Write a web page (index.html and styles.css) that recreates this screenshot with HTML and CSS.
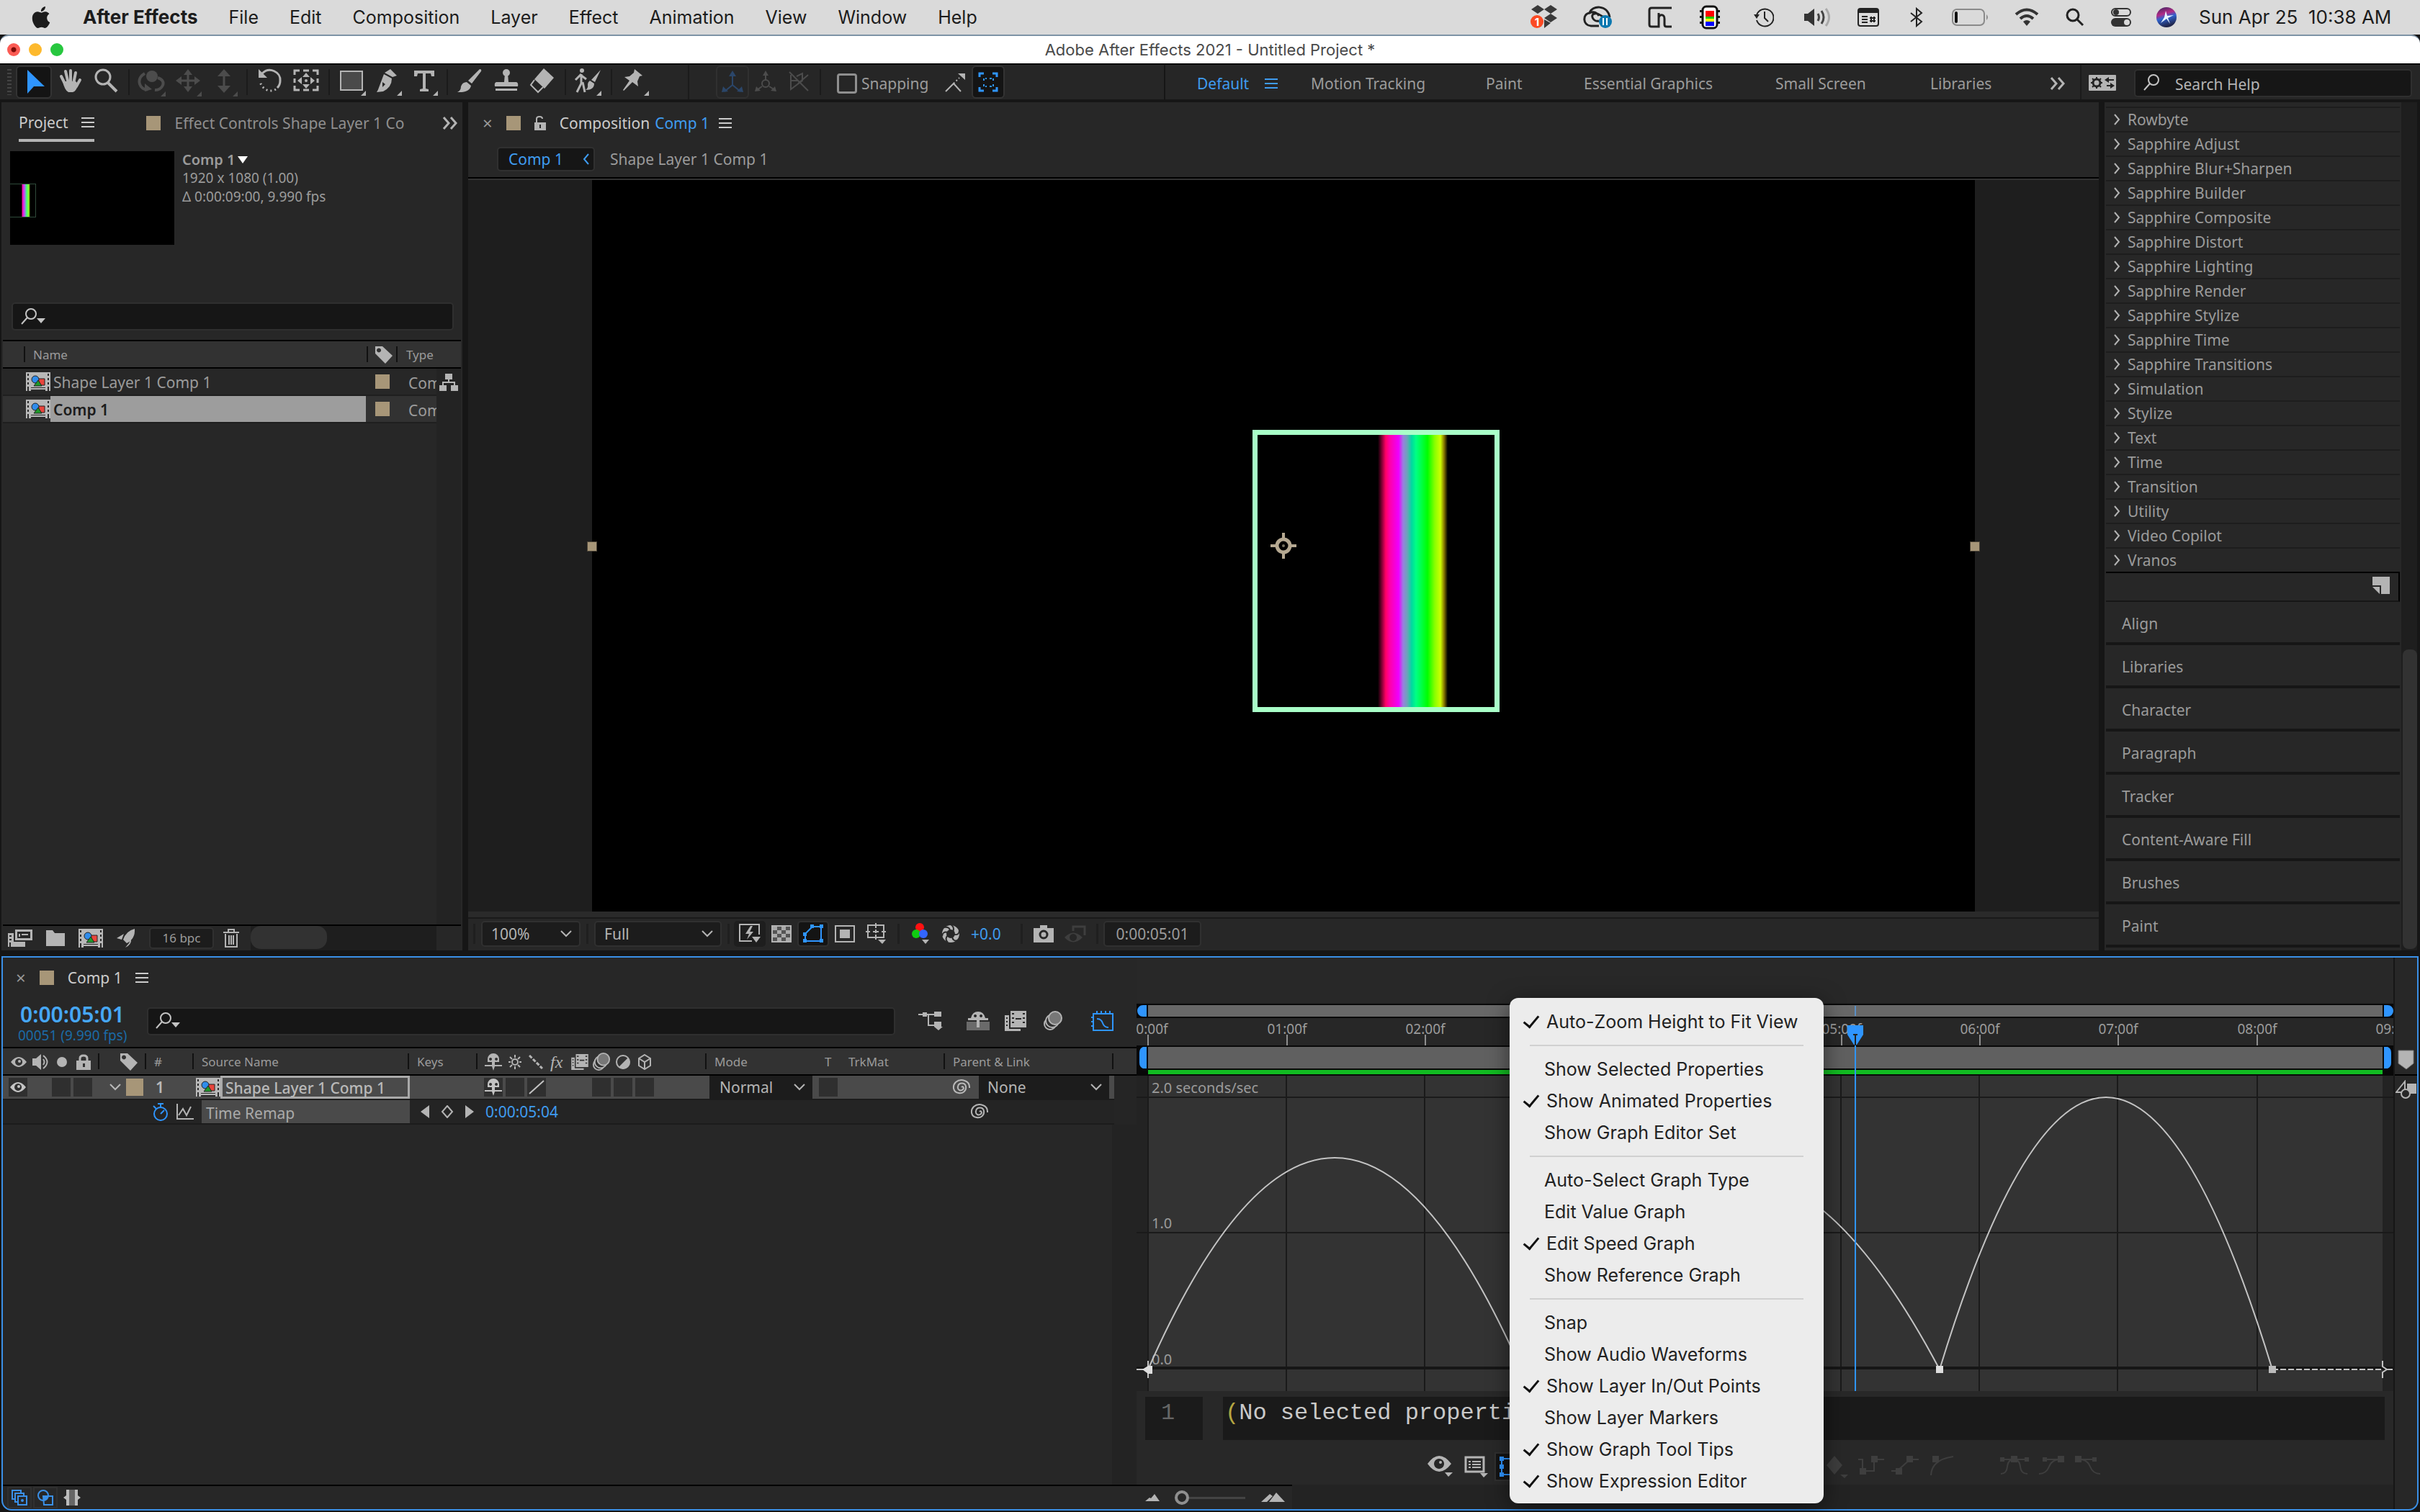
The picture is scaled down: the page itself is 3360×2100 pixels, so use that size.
FILE: index.html
```html
<!DOCTYPE html>
<html lang="en">
<head>
<meta charset="utf-8">
<title>Adobe After Effects 2021 - Untitled Project *</title>
<link rel="stylesheet" href="styles.css">
</head>
<body>
<svg class="defs" width="0" height="0" aria-hidden="true">
  <symbol id="comp" viewBox="0 0 34 26">
    <path fill="#b8b8b8" d="M0 0h34v26H0z"/>
    <path fill="#2b2b2b" d="M2 2h2v3H2zM2 8h2v3H2zM2 14h2v3H2zM2 20h2v6H2zM30 2h2v3h-2zM30 8h2v3h-2zM30 14h2v3h-2zM30 20h2v6h-2zM7 21h20v1H7zM7 24h20v2H7z"/>
    <path fill="#e8453c" stroke="#222" d="M17 9h9v9h-7z"/>
    <circle cx="13" cy="10" r="5" fill="#2f8ceb" stroke="#222"/>
    <path fill="#1f9a2a" stroke="#222" d="M17 11l5 8H11z"/>
  </symbol>
  <symbol id="menu" viewBox="0 0 18 16"><path fill="currentColor" d="M0 1h18v2H0zM0 7h18v2H0zM0 13h18v2H0z"/></symbol>
  <symbol id="more" viewBox="0 0 22 18"><path fill="none" stroke="currentColor" stroke-width="3" d="M2 1l7 8-7 8M12 1l7 8-7 8"/></symbol>
  <symbol id="down" viewBox="0 0 16 10"><path fill="none" stroke="currentColor" stroke-width="2" d="M1 1l7 7 7-7"/></symbol>
  <symbol id="right" viewBox="0 0 9 16"><path fill="none" stroke="currentColor" stroke-width="2" d="M1 1l6 7-6 7"/></symbol>
  <symbol id="find" viewBox="0 0 36 26"><circle cx="14" cy="9" r="7" fill="none" stroke="currentColor" stroke-width="2"/><path stroke="currentColor" stroke-width="2" d="M9 14l-8 9"/></symbol>
  <symbol id="findmenu" viewBox="0 0 36 26"><circle cx="14" cy="9" r="7" fill="none" stroke="currentColor" stroke-width="2"/><path stroke="currentColor" stroke-width="2" d="M9 14l-8 9"/><path fill="currentColor" d="M22 15h12l-6 7z"/></symbol>
  <symbol id="tag" viewBox="0 0 24 24"><path fill="currentColor" fill-rule="evenodd" d="M0 0h10l14 13-10 11L0 10zM5 2.500a3 3 0 1 0 .1 0z"/></symbol>
  <symbol id="eye" viewBox="0 0 22 16"><path fill="currentColor" fill-rule="evenodd" d="M0 8Q11-6 22 8 11 22 0 8zM11 3a5 5 0 1 0 .1 0z"/><circle cx="12" cy="7" r="2" fill="currentColor"/></symbol>
  <symbol id="shy" viewBox="0 0 24 24"><path fill="currentColor" fill-rule="evenodd" d="M4 12V8a8 8 0 0 1 16 0v4h-6v4h10v2H14l-2 6-2-6H0v-2h10v-4zM8 6a2 2 0 1 0 .1 0zM16 6a2 2 0 1 0 .1 0z"/></symbol>
  <symbol id="blur" viewBox="0 0 28 28"><circle cx="10" cy="18" r="8" fill="none" stroke="currentColor" stroke-width="2"/><circle cx="13" cy="14" r="9" fill="#303030" stroke="currentColor" stroke-width="2"/><circle cx="17" cy="10" r="9" fill="#777" stroke="currentColor" stroke-width="2"/></symbol>
  <symbol id="film" viewBox="0 0 30 28"><path fill="currentColor" fill-rule="evenodd" d="M8 0h22v23H8zM10 3v2h3V3zM10 9v2h3V9zM10 15v2h3v-2zM25 3v2h3V3zM25 9v2h3V9zM25 15v2h3v-2zM15 10v2h8v-2zM0 6h6v19h16v3H0zM2 9v2h2V9zM2 14v2h2v-2zM2 19v2h2v-2z"/></symbol>
  <symbol id="whip" viewBox="0 0 26 22"><path fill="none" stroke="currentColor" stroke-width="2" d="M13 11c2-2 4 1 2 3-3 3-8 1-7-4 1-6 10-6 11 0 1 7-5 10-10 9C1 18 0 9 5 4 12-2 25 2 24 12"/></symbol>
</svg>

<header class="menubar">
  <nav class="menus">
    <a href="#" aria-label="Apple"><svg width="30" height="32" viewBox="0 0 24 24"><path fill="#1c1c1c" d="M12.152 6.896c-.948 0-2.415-1.078-3.96-1.04-2.04.027-3.91 1.183-4.961 3.014-2.117 3.675-.546 9.103 1.519 12.090 1.013 1.454 2.208 3.090 3.792 3.039 1.520-.065 2.090-.987 3.935-.987 1.831 0 2.350.987 3.960.948 1.637-.026 2.676-1.480 3.676-2.948 1.156-1.688 1.636-3.325 1.662-3.415-.039-.013-3.182-1.221-3.220-4.857-.026-3.040 2.480-4.494 2.597-4.559-1.429-2.090-3.623-2.324-4.390-2.376-2-.156-3.675 1.090-4.610 1.090zM15.530 3.830c.843-1.012 1.400-2.427 1.245-3.830-1.207.052-2.662.805-3.532 1.818-.780.896-1.454 2.338-1.273 3.714 1.338.104 2.715-.688 3.559-1.701"/></svg></a>
    <a href="#" class="app">After Effects</a><a href="#">File</a><a href="#">Edit</a><a href="#">Composition</a><a href="#">Layer</a><a href="#">Effect</a><a href="#">Animation</a><a href="#">View</a><a href="#">Window</a><a href="#">Help</a>
  </nav>
  <div class="status">
    <svg width="38" height="34" viewBox="0 0 38 34"><path fill="#3a3a3a" d="M10 0l9 6-9 6-9-6zM28 0l9 6-9 6-9-6zM28 12l9 6-9 6-9-6zM19 20l9 5-9 7z"/><circle cx="9" cy="23" r="9" fill="#fb4a23"/><text x="9" y="29" text-anchor="middle" class="badge">1</text></svg>
    <svg width="40" height="32" viewBox="0 0 40 32"><g fill="none" stroke="#222" stroke-width="3"><path d="M22 28H11C-1 27-1 11 9 10c3-11 25-12 28 6"/><path d="M22 21c-8 2-13-9-6-10 7-2 9 6 15 4M9 10c6-3 11 0 13 4"/></g><circle cx="31" cy="22" r="9" fill="#0b78b0"/><path stroke="#fff" stroke-width="2" d="M28 17v10M33 17v10"/></svg>
    <svg width="34" height="30" viewBox="0 0 34 30"><path fill="none" stroke="#222" stroke-width="3" d="M33 2H5q-3 0-3 3v20q0 3 3 3h10V9M15 17c0-7 8-7 8 0v8q0 3 3 3h7"/></svg>
    <svg width="28" height="34" viewBox="0 0 28 34"><rect x="4" y="2" width="20" height="30" rx="5" fill="#fff" stroke="#111" stroke-width="3"/><path fill="#111" d="M0 7h3v3H0zM0 15h3v3H0zM0 23h3v3H0zM25 7h3v3h-3zM25 15h3v3h-3zM25 23h3v3h-3z"/><path fill="#f00" d="M8 8h12v8H8z"/><path fill="#2c0" d="M8 16h12v3H8z"/><path fill="#ff0" d="M8 19h12v4H8z"/><path fill="#00f" d="M8 23h12v6H8z"/></svg>
    <svg width="28" height="28" viewBox="0 0 28 28"><path fill="none" stroke="#222" stroke-width="2" d="M4 11A12 12 0 1 1 4 18M15 6v9l5 5"/><path fill="#222" d="M0 10h8l-4 6z"/></svg>
    <svg width="38" height="26" viewBox="0 0 38 26"><path fill="#333" d="M0 8h5l9-7v24l-9-7H0z"/><path fill="none" stroke="#444" stroke-width="3" d="M19 8q3 5 0 10M24 4q6 9 0 18"/><path fill="none" stroke="#aaa" stroke-width="3" d="M30 1q9 12 0 24"/></svg>
    <svg width="30" height="26" viewBox="0 0 30 26"><rect x="1" y="1" width="28" height="24" rx="3" fill="none" stroke="#222" stroke-width="2"/><path fill="#222" d="M2 2h26v5H2zM6 11h8v2H6zM6 15h8v2H6zM6 19h8v2H6z"/><path fill="none" stroke="#222" stroke-width="2" d="M19 12v8M23 12v8M17 14h8M17 18h8"/></svg>
    <svg width="18" height="28" viewBox="0 0 18 28"><path fill="none" stroke="#222" stroke-width="2" d="M1 8l15 12-7 6V2l7 6L1 20"/></svg>
    <svg width="52" height="24" viewBox="0 0 52 24"><rect x="1" y="1" width="44" height="22" rx="6" fill="none" stroke="#8a8a8a" stroke-width="2"/><rect x="4" y="4" width="4" height="16" rx="2" fill="#111"/><path fill="#8a8a8a" d="M48 8q4 4 0 8z"/></svg>
    <svg width="34" height="26" viewBox="0 0 34 26"><path fill="none" stroke="#333" stroke-width="4" d="M2 9q15-13 30 0M8 15q9-8 18 0"/><path fill="#333" d="M12 19q5-4 10 0l-5 6z"/></svg>
    <svg width="26" height="26" viewBox="0 0 26 26"><circle cx="10" cy="10" r="8" fill="none" stroke="#222" stroke-width="3"/><path stroke="#222" stroke-width="3" d="M16 16l8 8"/></svg>
    <svg width="28" height="26" viewBox="0 0 28 26"><rect x="1" y="1" width="26" height="10" rx="5" fill="none" stroke="#333" stroke-width="2"/><circle cx="7" cy="6" r="4" fill="#333"/><rect y="14" width="28" height="12" rx="6" fill="#333"/><circle cx="22" cy="20" r="4" fill="#dadada"/></svg>
    <svg width="28" height="28" viewBox="0 0 28 28"><defs><linearGradient id="siri" x2=".3" y2="1"><stop offset="0" stop-color="#33265e"/><stop offset=".4" stop-color="#b32a86"/><stop offset=".6" stop-color="#3063cf"/><stop offset="1" stop-color="#20264d"/></linearGradient></defs><circle cx="14" cy="14" r="14" fill="url(#siri)"/><path fill="#e8f4ff" d="M13 5l2 7 9-1-8 4 3 8-5-7-8 6 5-8z"/></svg>
    <time>Sun Apr 25&nbsp; 10:38 AM</time>
  </div>
</header>

<div class="titlebar">
  <div class="lights"><button class="light close" aria-label="Close"></button><button class="light min" aria-label="Minimize"></button><button class="light max" aria-label="Zoom"></button></div>
  <h1>Adobe After Effects 2021 - Untitled Project *</h1>
  <span></span>
</div>

<div class="toolbar">
  <div class="tools">
    <i class="grip"></i>
    <button class="tool on" aria-label="Selection"><svg width="40" height="44"><path fill="#2f95ff" d="M11 5v33l9-10h15z"/></svg></button>
    <button class="tool" aria-label="Hand"><svg width="40" height="44"><g fill="none" stroke="currentColor" stroke-width="4" stroke-linecap="round"><path d="M8 14l6 12M14 7l4 17M21 6v18M28 9l-3 15M34 19l-5 9"/></g><path fill="currentColor" d="M10 21h18l4 4q-4 11-8 11h-6q-5-2-8-15z"/></svg></button>
    <button class="tool" aria-label="Zoom"><svg width="40" height="44"><circle cx="16" cy="15" r="10" fill="none" stroke="currentColor" stroke-width="3"/><path stroke="currentColor" stroke-width="4" d="M23 23l12 12"/></svg></button>
    <i class="sep"></i>
    <button class="tool dim" aria-label="Orbit"><svg width="40" height="44"><circle cx="20" cy="14" r="8" fill="currentColor"/><path fill="none" stroke="currentColor" stroke-width="4" d="M10 10C-4 18 4 34 14 32M28 16c14 4 6 18-4 17"/><path fill="currentColor" d="M10 24l10 8-10 3zM39 42h-7l7-7z"/></svg></button>
    <button class="tool dim" aria-label="Pan camera"><svg width="40" height="44"><path stroke="currentColor" stroke-width="3" d="M20 8v24M8 20h24"/><path fill="currentColor" d="M20 4l6 8H14zM20 36l6-8H14zM3 20l8-6v12zM37 20l-8-6v12zM39 42h-7l7-7z"/></svg></button>
    <button class="tool dim" aria-label="Dolly"><svg width="40" height="44"><path stroke="currentColor" stroke-width="3" d="M20 8v24"/><path fill="currentColor" d="M20 4l9 10H11zM20 37l9-10H11zM39 42h-7l7-7z"/></svg></button>
    <i class="sep"></i>
    <button class="tool" aria-label="Rotation"><svg width="40" height="44"><path fill="none" stroke="currentColor" stroke-width="3" d="M9 10c10-10 26-2 25 10 0 4-2 8-4 10"/><path fill="none" stroke="currentColor" stroke-width="3" stroke-dasharray="2 4" d="M28 32C18 38 7 30 6 20"/><path fill="currentColor" d="M4 4v12h12z"/></svg></button>
    <button class="tool" aria-label="Pan behind"><svg width="40" height="44"><path fill="none" stroke="currentColor" stroke-width="3" d="M4 12V6h7M16 6h8M29 6h7v6M36 17v6M36 27v6h-7M24 33h-8M11 33H4v-6M4 23v-6"/><path fill="currentColor" d="M20 9l5 6H15zM20 31l5-6H15zM8 20l6-5v10zM32 20l-6-5v10z"/><circle cx="20" cy="20" r="2" fill="currentColor"/></svg></button>
    <i class="sep"></i>
    <button class="tool" aria-label="Rectangle"><svg width="40" height="44"><path fill="#4a4a4a" stroke="currentColor" stroke-width="2" d="M4 7h30v26H4z"/><path fill="currentColor" d="M39 41h-7l7-7z"/></svg></button>
    <button class="tool" aria-label="Pen"><svg width="40" height="44"><path fill="currentColor" d="M23 4l9 9-6 2-11-6zM14 11l11 6q0 12-12 18l-9 1 8-14v7l4-4-4-3-7 13zM39 41h-7l7-7z"/></svg></button>
    <button class="tool" aria-label="Type"><svg width="40" height="44"><path fill="currentColor" d="M6 6h28v8h-4l-1-4h-7v21l4 1v3H14v-3l4-1V10h-7l-1 4H6zM39 41h-7l7-7z"/></svg></button>
    <i class="sep"></i>
    <button class="tool" aria-label="Brush"><svg width="40" height="44"><path fill="currentColor" d="M33 4q3 0 2 3L22 24l-5-4zM15 22l6 5q-2 10-19 9 5-2 5-8 2-6 8-6z"/></svg></button>
    <button class="tool" aria-label="Clone stamp"><svg width="40" height="44"><circle cx="20" cy="9" r="5" fill="currentColor"/><path fill="currentColor" d="M18 10h4l1 12h11q3 1 2 6H4q-1-5 2-6h11zM5 31h30v3H5z"/></svg></button>
    <button class="tool" aria-label="Eraser"><svg width="40" height="44"><path fill="currentColor" d="M22 3l14 13-13 15L9 18z"/><path fill="none" stroke="currentColor" stroke-width="2" d="M9 19l-5 7 10 10 7-7"/></svg></button>
    <i class="sep"></i>
    <button class="tool" aria-label="Roto brush"><svg width="40" height="44"><circle cx="11" cy="6" r="3" fill="currentColor"/><path fill="none" stroke="currentColor" stroke-width="3" d="M10 11v13l-6 12M12 22l3 14M2 19l7-7 8 6"/><path fill="currentColor" d="M37 5l-8 17-5-3zM22 20l6 4q0 9-12 9 4-3 3-7 0-4 3-6zM38 41h-7l7-7z"/></svg></button>
    <i class="sep"></i>
    <button class="tool" aria-label="Puppet pin"><svg width="40" height="44"><path fill="currentColor" d="M20 4l11 9-4 1-3 7 1 7-8-6L5 34l-1-1 9-13-7-5 7-1 6-5zM40 41h-7l7-7z"/></svg></button>
    <i class="sep wide"></i>
    <button class="tool axis local" aria-label="Local axis"><svg width="40" height="44"><path fill="none" stroke="currentColor" stroke-width="2" d="M20 10v16L9 35M20 26l11 9"/><path fill="currentColor" d="M20 6l5 8H15zM5 36l2-8 7 7zM35 36l-2-8-7 7z"/></svg></button>
    <button class="tool axis dim" aria-label="World axis"><svg width="40" height="44"><path fill="none" stroke="currentColor" stroke-width="2" d="M20 10v10M15 28L8 33M25 28l8 5"/><circle cx="20" cy="24" r="5" fill="none" stroke="currentColor" stroke-width="2"/><path fill="currentColor" d="M20 6l4 7h-8zM5 35l2-7 6 6zM35 35l-2-7-6 6z"/></svg></button>
    <button class="tool axis dim" aria-label="View axis"><svg width="40" height="44"><path fill="none" stroke="currentColor" stroke-width="2" d="M7 8l26 26M9 12v20l16-12V10l-8 4M19 24l14-12M8 20h10"/></svg></button>
    <i class="sep"></i>
    <label class="snap"><input type="checkbox">Snapping</label>
    <button class="tool axis" aria-label="Snap to edges"><svg width="40" height="44"><path fill="none" stroke="currentColor" stroke-width="2" d="M7 35l11-11 10 11"/><path stroke="currentColor" stroke-width="2" stroke-dasharray="2 3" d="M18 24l8-8"/><path fill="currentColor" d="M24 10h10v9z"/></svg></button>
    <button class="tool axis on" aria-label="Snap to features"><svg width="40" height="44"><path fill="none" stroke="#2f95ff" stroke-width="3" d="M8 15v-5h6M26 10h6v5M32 29v5h-6M14 34H8v-5"/><path fill="none" stroke="#2f95ff" stroke-width="2" stroke-dasharray="3 2" d="M14 20v-3h4M22 17h5v4M14 25v3h4M22 28h5v-4"/></svg></button>
  </div>
  <nav class="spaces">
    <a href="#" class="sel">Default</a><button class="ic sel" aria-label="Workspace menu"><svg width="18" height="16"><use href="#menu"/></svg></button>
    <a href="#">Motion Tracking</a><a href="#">Paint</a><a href="#">Essential Graphics</a><a href="#">Small Screen</a><a href="#">Libraries</a>
    <button class="ic" aria-label="More workspaces"><svg width="22" height="18"><use href="#more"/></svg></button>
  </nav>
  <div class="help">
    <button class="ic" aria-label="Sync settings"><svg width="38" height="22" viewBox="0 0 38 22"><rect width="38" height="22" rx="1" fill="#b4b4b4"/><circle cx="11" cy="11" r="5" fill="none" stroke="#222" stroke-width="3"/><path stroke="#222" stroke-width="2" d="M11 3v3M11 16v3M3 11h3M16 11h3M5 5l2 2M15 15l2 2M17 5l-2 2M7 15l-2 2"/><path fill="#222" d="M22 7l6-4v3h7v2h-7v3zM36 15l-6-4v3h-5v2h5v3z"/></svg></button>
    <label class="search"><svg width="36" height="26"><use href="#find"/></svg><input type="text" placeholder="Search Help" aria-label="Search Help"></label>
  </div>
</div>

<main class="upper">
  <section class="panel project">
    <div class="tabs">
      <button class="tab active">Project <svg width="18" height="16"><use href="#menu"/></svg></button>
      <button class="tab second"><i class="swatch"></i><span>Effect Controls Shape Layer 1 Co</span></button>
      <button class="ic" aria-label="More tabs"><svg width="22" height="18"><use href="#more"/></svg></button>
    </div>
    <div class="info">
      <div class="thumb"><i></i></div>
      <div class="meta"><b>Comp 1 <svg width="14" height="10" viewBox="0 0 14 10"><path fill="#fff" d="M0 0h14L7 10z"/></svg></b><span>1920 x 1080 (1.00)</span><span>Δ 0:00:09:00, 9.990 fps</span></div>
    </div>
    <label class="search wide"><svg width="36" height="26"><use href="#findmenu"/></svg><input type="text" aria-label="Search project"></label>
    <table class="items">
      <colgroup><col class="c-gap"><col><col class="c-tag"><col class="c-type"><col class="c-flow"></colgroup>
      <thead><tr><th></th><th class="pad">Name</th><th><svg width="24" height="24"><use href="#tag"/></svg></th><th class="type">Type</th><th></th></tr></thead>
      <tbody>
        <tr><td></td><td><div class="name"><svg width="34" height="26"><use href="#comp"/></svg><span>Shape Layer 1 Comp 1</span></div></td><td><i class="swatch small"></i></td><td class="type">Com</td><td class="flow"><svg width="26" height="24" viewBox="0 0 26 24"><path fill="currentColor" d="M8 0h10v8H8zM0 16h10v8H0zM16 16h10v8H16z"/><path fill="none" stroke="currentColor" stroke-width="2" d="M13 8v4M5 16v-4h16v4"/></svg></td></tr>
        <tr class="picked"><td></td><td><div class="name"><svg width="34" height="26"><use href="#comp"/></svg><span>Comp 1</span></div></td><td><i class="swatch small"></i></td><td class="type">Com</td><td class="flow"></td></tr>
      </tbody>
    </table>
    <div class="rest"></div>
    <footer class="projbar">
      <button class="ic" aria-label="Interpret footage"><svg width="34" height="24" viewBox="0 0 34 24"><path fill="currentColor" fill-rule="evenodd" d="M10 0h24v15H10zM13 3v9h18V3zM0 5h8v12h16v7H0zM2 8v2h3V8zM2 13v2h3v-2zM2 18v6h2v-6z"/><path fill="currentColor" d="M15 6h2v4h-2zM19 6h9v2h-9z"/></svg></button>
      <button class="ic" aria-label="New folder"><svg width="26" height="22" viewBox="0 0 26 22"><path fill="currentColor" d="M0 0h9l3 4h14v18H0z"/></svg></button>
      <button class="ic" aria-label="New composition"><svg width="34" height="26"><use href="#comp"/></svg></button>
      <button class="ic" aria-label="Project settings"><svg width="26" height="26" viewBox="0 0 26 26"><path fill="currentColor" d="M25 0q1 14-11 20l-5-5Q13 3 25 0zM0 13l10-6-3 8zM12 26l5-6 3-6q1 8-8 12z"/></svg></button>
      <button class="bpc">16 bpc</button>
      <button class="ic" aria-label="Delete"><svg width="22" height="26" viewBox="0 0 22 26"><path fill="none" stroke="currentColor" stroke-width="2" d="M0 5h22M7 5V1h8v4M3 7v18h16V7M8 9v13M11 9v13M14 9v13"/></svg></button>
      <div class="hscroll"><i></i></div>
    </footer>
  </section>

  <section class="panel comp">
    <div class="tabs">
      <button class="ic x" aria-label="Close tab">×</button><i class="swatch"></i>
      <svg width="16" height="20" viewBox="0 0 16 20"><path fill="none" stroke="#b4b4b4" stroke-width="2" d="M3 9V4q0-3 4-3t4 3"/><path fill="#b4b4b4" fill-rule="evenodd" d="M0 9h16v11H0zM7 12v5h2v-5z"/></svg>
      <button class="tab">Composition <em>Comp 1</em> <svg width="18" height="16"><use href="#menu"/></svg></button>
    </div>
    <div class="crumbs">
      <a href="#" class="cur">Comp 1 <svg width="9" height="16" viewBox="0 0 9 16"><path fill="none" stroke="currentColor" stroke-width="2" d="M8 1L2 8l6 7"/></svg></a><a href="#">Shape Layer 1 Comp 1</a>
    </div>
    <div class="viewer">
      <div class="canvas">
        <div class="shape"></div>
        <svg class="anchor" width="38" height="38" viewBox="0 0 38 38"><path stroke="#b5a891" stroke-width="4" d="M19 1v9M19 28v9M1 19h9M28 19h9"/><circle cx="19" cy="19" r="9" fill="none" stroke="#b5a891" stroke-width="5"/><circle cx="19" cy="19" r="2" fill="#77705f"/></svg>
        <i class="handle l"></i><i class="handle r"></i>
      </div>
    </div>
    <footer class="viewbar">
      <i class="div"></i>
      <span class="pick zoom"><select aria-label="Magnification"><option>100%</option></select><svg width="16" height="10"><use href="#down"/></svg></span>
      <i class="div"></i>
      <span class="pick res"><select aria-label="Resolution"><option>Full</option></select><svg width="16" height="10"><use href="#down"/></svg></span>
      <i class="div"></i>
      <button class="vb box" aria-label="Fast previews"><svg width="30" height="28" viewBox="0 0 30 28"><path fill="none" stroke="currentColor" stroke-width="2" d="M18 24H1V1h27v14"/><path fill="currentColor" d="M16 3L9 14h5l-3 8 9-11h-5l4-8zM18 18h12l-6 8z"/></svg></button>
      <button class="vb" aria-label="Transparency grid"><svg width="28" height="24" viewBox="0 0 28 24"><path fill="#555" stroke="currentColor" stroke-width="2" d="M1 1h26v22H1z"/><path fill="#aaa" d="M2 2h6v5H2zM14 2h6v5h-6zM8 7h6v5H8zM20 7h6v5h-6zM2 12h6v5H2zM14 12h6v5h-6zM8 17h6v5H8zM20 17h6v5h-6z"/></svg></button>
      <button class="vb on" aria-label="Mask visibility"><svg width="28" height="26" viewBox="0 0 28 26"><path fill="none" stroke="#2f95ff" stroke-width="2" d="M3 23h22V3H13L3 13z"/><path fill="#2f95ff" d="M0 20h5v5H0zM23 20h5v5h-5zM23 0h5v5h-5zM10 0h5v5h-5zM0 11h5v5H0z"/></svg></button>
      <button class="vb" aria-label="Region of interest"><svg width="28" height="24" viewBox="0 0 28 24"><path fill="none" stroke="currentColor" stroke-width="2" d="M1 1h26v22H1z"/><path fill="currentColor" d="M7 6h14v12H7z"/></svg></button>
      <button class="vb" aria-label="Grid options"><svg width="30" height="30" viewBox="0 0 30 30"><path fill="none" stroke="currentColor" stroke-width="2" d="M3 3h22v17H3zM14 0v7M14 16v7M0 12h6M22 12h6M10 12h8M14 9v5"/><path fill="currentColor" d="M17 23h11l-5 6z"/></svg></button>
      <i class="div"></i>
      <button class="vb" aria-label="Channels"><svg width="26" height="30" viewBox="0 0 26 30"><circle cx="12" cy="6" r="6" fill="#f11"/><circle cx="7" cy="15" r="6" fill="#1c1"/><circle cx="17" cy="15" r="6" fill="#36f"/><path fill="currentColor" d="M15 23h10l-5 6z"/></svg></button>
      <button class="vb ap" aria-label="Reset exposure"><svg width="26" height="26" viewBox="0 0 26 26"><circle cx="13" cy="13" r="9" fill="none" stroke="currentColor" stroke-width="6"/><path fill="none" stroke="#282828" stroke-width="2" d="M13 0q6 4 3 10M25 8q0 7-7 6M23 22q-7 2-8-5M9 25q-5-5 0-10M1 16q1-7 8-5M4 4q7-1 8 4"/></svg></button>
      <span class="expo">+0.0</span>
      <i class="div"></i>
      <button class="vb" aria-label="Take snapshot"><svg width="28" height="24" viewBox="0 0 28 24"><path fill="currentColor" d="M9 0h10v4h9v20H0V4h9z"/><circle cx="14" cy="13" r="5" fill="none" stroke="#282828" stroke-width="3"/></svg></button>
      <button class="vb dim" aria-label="Show snapshot"><svg width="30" height="28" viewBox="0 0 30 28"><path fill="currentColor" fill-rule="evenodd" d="M0 19Q12 6 25 19 12 32 0 19zM12 14a5 5 0 1 0 .1 0z"/><path fill="none" stroke="currentColor" stroke-width="3" d="M12 10V4h16v12"/></svg></button>
      <i class="div"></i>
      <button class="time">0:00:05:01</button>
    </footer>
  </section>

  <aside class="panel side">
    <ul class="effects">
      <li><svg width="9" height="16"><use href="#right"/></svg>Rowbyte</li>
      <li><svg width="9" height="16"><use href="#right"/></svg>Sapphire Adjust</li>
      <li><svg width="9" height="16"><use href="#right"/></svg>Sapphire Blur+Sharpen</li>
      <li><svg width="9" height="16"><use href="#right"/></svg>Sapphire Builder</li>
      <li><svg width="9" height="16"><use href="#right"/></svg>Sapphire Composite</li>
      <li><svg width="9" height="16"><use href="#right"/></svg>Sapphire Distort</li>
      <li><svg width="9" height="16"><use href="#right"/></svg>Sapphire Lighting</li>
      <li><svg width="9" height="16"><use href="#right"/></svg>Sapphire Render</li>
      <li><svg width="9" height="16"><use href="#right"/></svg>Sapphire Stylize</li>
      <li><svg width="9" height="16"><use href="#right"/></svg>Sapphire Time</li>
      <li><svg width="9" height="16"><use href="#right"/></svg>Sapphire Transitions</li>
      <li><svg width="9" height="16"><use href="#right"/></svg>Simulation</li>
      <li><svg width="9" height="16"><use href="#right"/></svg>Stylize</li>
      <li><svg width="9" height="16"><use href="#right"/></svg>Text</li>
      <li><svg width="9" height="16"><use href="#right"/></svg>Time</li>
      <li><svg width="9" height="16"><use href="#right"/></svg>Transition</li>
      <li><svg width="9" height="16"><use href="#right"/></svg>Utility</li>
      <li><svg width="9" height="16"><use href="#right"/></svg>Video Copilot</li>
      <li><svg width="9" height="16"><use href="#right"/></svg>Vranos</li>
    </ul>
    <div class="newfx"><button class="ic" aria-label="New"><svg width="24" height="24" viewBox="0 0 24 24"><path fill="currentColor" d="M0 0h24v24H12V12H0zM0 14h10v10z"/></svg></button></div>
    <div class="closed">
      <button>Align</button><button>Libraries</button><button>Character</button><button>Paragraph</button><button>Tracker</button><button>Content-Aware Fill</button><button>Brushes</button><button>Paint</button>
    </div>
  </aside>
  <div class="vscroll"><i></i></div>
</main>

<section class="timeline">
  <div class="layers">
    <div class="tabs">
      <button class="ic x" aria-label="Close tab">×</button><i class="swatch"></i>
      <button class="tab">Comp 1 <svg width="18" height="16"><use href="#menu"/></svg></button>
    </div>
    <div class="tltop">
      <div class="clock"><strong>0:00:05:01</strong><span>00051 (9.990 fps)</span></div>
      <label class="search"><svg width="36" height="26"><use href="#findmenu"/></svg><input type="text" aria-label="Search layers"></label>
      <div class="tlbtns">
        <svg width="34" height="26" viewBox="0 0 34 26"><path fill="none" stroke="currentColor" stroke-width="2" d="M0 4h24M14 4v15h10"/><path fill="currentColor" d="M6 1h6v6H6zM22 0h10v7H22zM22 14h10v7H22zM22 21h12l-6 5z"/></svg>
        <svg width="32" height="26" viewBox="0 0 32 26"><path fill="#6a6a6a" d="M0 14h32v12H0z"/><path fill="currentColor" fill-rule="evenodd" d="M2 12V9h4q2-9 10-9t10 9h4v3H18v10h-4V12zM12 4a2 2 0 1 0 .1 0zM20 4a2 2 0 1 0 .1 0z"/></svg>
        <svg width="30" height="28"><use href="#film"/></svg>
        <svg width="28" height="28"><use href="#blur"/></svg>
        <svg width="32" height="30" viewBox="0 0 32 30"><path fill="none" stroke="#2f95ff" stroke-width="2" d="M3 5h27v23H3zM8 5V1M14 5V1M20 5V1M26 5V1M0 10h3M0 16h3M0 22h3M8 12q6 0 8 6t8 6"/></svg>
      </div>
    </div>
    <table class="grid">
      <colgroup><col class="g-av"><col class="g-tag"><col class="g-num"><col><col class="g-keys"><col class="g-sw"><col class="g-mode"><col class="g-par"><col class="g-end"></colgroup>
      <thead><tr>
        <th><div class="av"><svg width="22" height="16"><use href="#eye"/></svg><svg width="26" height="22" viewBox="0 0 26 22"><path fill="currentColor" d="M0 6h5l7-6v22l-7-6H0z"/><path fill="none" stroke="currentColor" stroke-width="2" d="M15 7q3 4 0 8M15 2q11 9 0 18"/></svg><svg width="14" height="14"><circle cx="7" cy="7" r="7" fill="currentColor"/></svg><svg width="20" height="22" viewBox="0 0 20 22"><path fill="none" stroke="currentColor" stroke-width="3" d="M5 9V6q0-4 5-4t5 4v3"/><path fill="currentColor" fill-rule="evenodd" d="M0 9h20v13H0zM9 13v5h3v-5z"/></svg></div></th>
        <th class="tagc"><svg width="26" height="24"><use href="#tag"/></svg></th>
        <th class="pad">#</th><th class="pad">Source Name</th><th class="pad">Keys</th>
        <th><div class="sw"><svg width="24" height="24"><use href="#shy"/></svg><svg width="20" height="22" viewBox="0 0 20 22"><circle cx="10" cy="11" r="4" fill="none" stroke="currentColor" stroke-width="2"/><path stroke="currentColor" stroke-width="2" d="M10 1v4M10 17v4M1 11h3M16 11h3M3 4l3 3M14 15l3 3M17 4l-3 3M6 15l-3 3"/></svg><svg width="20" height="20" viewBox="0 0 20 20"><path stroke="currentColor" stroke-width="3" stroke-dasharray="5 2" d="M1 1l18 18"/></svg><i class="fx">fx</i><svg width="26" height="22"><use href="#film"/></svg><svg width="26" height="26"><use href="#blur"/></svg><svg width="20" height="20"><circle cx="10" cy="10" r="9" fill="none" stroke="currentColor" stroke-width="2"/><path fill="currentColor" d="M17 4A9 9 0 0 1 4 17z"/></svg><svg width="20" height="22" viewBox="0 0 20 22"><path fill="none" stroke="currentColor" stroke-width="2" d="M10 1l8 5v10l-8 5-8-5V6zM2 6l8 5 8-5M10 11v10"/></svg></div></th>
        <th class="pad"><div class="mode"><span>Mode</span><span>T</span><span>TrkMat</span></div></th><th class="pad">Parent &amp; Link</th><th></th>
      </tr></thead>
      <tbody>
        <tr class="layer">
          <td><div class="cells"><i><svg width="22" height="18"><use href="#eye"/></svg></i><b></b><i></i><i></i></div></td>
          <td><div class="lab"><svg width="16" height="10"><use href="#down"/></svg><i class="swatch"></i></div></td>
          <td class="num">1</td>
          <td><div class="src"><svg width="34" height="26"><use href="#comp"/></svg><span>Shape Layer 1 Comp 1</span></div></td>
          <td></td>
          <td><div class="cells"><i><svg width="24" height="24"><use href="#shy"/></svg></i><i></i><i><svg width="22" height="20"><path stroke="currentColor" stroke-width="2" d="M1 19L21 1"/></svg></i><b></b><b></b><i></i><i></i><i></i></div></td>
          <td><div class="blend"><span class="pick"><select aria-label="Blending mode"><option>Normal</option></select><svg width="16" height="10"><use href="#down"/></svg></span><i></i></div></td>
          <td><div class="parent"><svg width="26" height="22"><use href="#whip"/></svg><span class="pick"><select aria-label="Parent"><option>None</option></select><svg width="16" height="10"><use href="#down"/></svg></span></div></td>
          <td class="end"></td>
        </tr>
        <tr class="prop">
          <td></td><td></td>
          <td><div class="watch"><svg width="24" height="26" viewBox="0 0 24 26"><circle cx="12" cy="16" r="9" fill="none" stroke="#2f95ff" stroke-width="2"/><path fill="none" stroke="#2f95ff" stroke-width="2" d="M12 16l5-5M8 2h8M12 2v5M2 5l4 4"/></svg><svg width="24" height="22" viewBox="0 0 24 22"><path fill="none" stroke="currentColor" stroke-width="2" d="M1 0v21h23M3 16l6-9 5 9 6-12"/></svg></div></td>
          <td><div class="pname">Time Remap</div></td>
          <td><div class="keys"><svg width="12" height="18"><path fill="currentColor" d="M12 0v18L0 9z"/></svg><svg width="18" height="18"><path fill="none" stroke="currentColor" stroke-width="2" d="M9 1l7 8-7 8-7-8z"/></svg><svg width="12" height="18"><path fill="currentColor" d="M0 0v18l12-9z"/></svg></div></td>
          <td class="val">0:00:05:04</td><td></td>
          <td><div class="link"><svg width="26" height="22"><use href="#whip"/></svg></div></td><td class="end"></td>
        </tr>
      </tbody>
    </table>
    <div class="rest"></div>
    <footer class="tlbar">
      <button class="mini" aria-label="Layer switches"><svg width="22" height="22" viewBox="0 0 22 22"><path fill="none" stroke="#3a90e8" stroke-width="2" d="M4 13H1V1h12v3M8 17H5V5h12v3M9 9h12v12H9z"/><circle cx="15" cy="15" r="2" fill="#3a90e8"/></svg></button>
      <button class="mini" aria-label="Transfer controls"><svg width="22" height="22" viewBox="0 0 22 22"><circle cx="8" cy="8" r="7" fill="none" stroke="#3a90e8" stroke-width="2"/><path fill="none" stroke="#3a90e8" stroke-width="2" d="M8 9h13v12H9z"/><path fill="#3a90e8" d="M8 9h7q0 6-7 6z"/></svg></button>
      <button class="ic" aria-label="In out panes"><svg width="24" height="22" viewBox="0 0 24 22"><path fill="#666" d="M7 0h10v22H7z"/><path fill="#bbb" d="M4 0h4v22H4v-8l-4-3 4-3zM16 0h4v8l4 3-4 3v8h-4z"/></svg></button>
    </footer>
  </div>

  <div class="graph">
    <svg class="plot" viewBox="0 0 1745 540" preserveAspectRatio="none">
      <rect x="0" y="0" width="1745" height="540" fill="#272727"/>
      <path fill="#080808" d="M0 2h1745v20H0zM0 60h1745v42H0z"/>
      <path fill="#686868" d="M16 4h1714v16H16z"/><path fill="#606060" d="M16 62h1714v30H16z"/>
      <path fill="#12bb22" d="M16 94h1714v6H16z"/>
      <path fill="#2f95ff" d="M14 4H9a8 8 0 0 0 0 16h5zM1732 4h5a8 8 0 0 1 0 16h-5zM14 62h-5q-5 2-5 8v14q0 6 5 8h5zM1732 62h5q5 2 5 8v14q0 6-5 8h-5z"/>
      <path stroke="#8e8e8e" stroke-width="2" d="M16 45v15M209 45v15M401 45v15M594 45v15M786 45v15M979 45v15M1171 45v15M1363 45v15M1556 45v15"/>
      <g class="ruler"><text x="16" y="44">00:00f</text><text x="209" y="44">01:00f</text><text x="401" y="44">02:00f</text><text x="979" y="44">05:00f</text><text x="1171" y="44">06:00f</text><text x="1363" y="44">07:00f</text><text x="1556" y="44">08:00f</text><text x="1748" y="44">09:00f</text></g>
      <path fill="#232323" d="M0 102h1745v438H0z"/><path fill="#333" d="M16 102h1714v438H16z"/>
      <path fill="none" stroke="#1a1a1a" stroke-width="2" d="M16 102v438M208 102v438M400 102v438M593 102v438M785 102v438M978 102v438M1170 102v438M1362 102v438M1556 102v438M0 132h1745M0 320h1745"/>
      <path stroke="#161616" stroke-width="4" d="M0 508h1745"/>
      <g class="scale"><text x="21" y="126">2.0 seconds/sec</text><text x="21" y="314">1.0</text><text x="21" y="503">0.0</text></g>
      <path fill="none" stroke="#c4c4c4" stroke-width="2" d="M16 510Q275-78 534 510 824-40 1115 510 1346-246 1577 510"/>
      <path stroke="#c4c4c4" stroke-width="2" stroke-dasharray="8 3" d="M1577 510h152"/>
      <path fill="none" stroke="#c4c4c4" stroke-width="2" d="M1730 498v8l6 4-6 4v8M1736 510h8M0 510h10M16 498v24"/>
      <path fill="#ddd" d="M16 505h6v11h-6l-8-6zM1110 505h10v10h-10z"/><path fill="#bbb" d="M1572 505h10v10h-10z"/>
      <path fill="#2f95ff" d="M997 60h2v480h-2z"/><path fill="#5a8fc4" d="M997 5h2v14h-2z"/>
      <path fill="#2f95ff" d="M987 32h22v13l-9 14h-4l-9-14z"/><path fill="#222" d="M995 44h6v2h-2v14h-2V46h-2z"/>
    </svg>
    <div class="expr"><span class="gutter">1</span><code><b>(</b>No selected properties)</code></div>
    <div class="gtools">
      <button class="ic" aria-label="Choose properties"><svg width="36" height="30" viewBox="0 0 36 30"><path fill="currentColor" fill-rule="evenodd" d="M0 11q16-22 33 0-17 22-33 0zM16 4a7 7 0 1 0 .1 0z"/><circle cx="18" cy="9" r="2" fill="currentColor"/><path fill="currentColor" d="M24 23h11l-6 6z"/></svg></button>
      <button class="ic" aria-label="Graph options"><svg width="36" height="30" viewBox="0 0 36 30"><path fill="none" stroke="currentColor" stroke-width="3" d="M2 2h25v20H2z"/><path fill="currentColor" d="M6 7h3v2H6zM11 7h12v2H11zM6 11h3v2H6zM11 11h12v2H11zM6 15h3v2H6zM11 15h12v2H11zM22 24h11l-6 6z"/></svg></button>
      <button class="ic boxed" aria-label="Transform box"><svg width="30" height="30" viewBox="0 0 30 30"><path fill="none" stroke="#2f95ff" stroke-width="2" d="M4 4h22v22H4z"/><path fill="#2f95ff" d="M1 1h6v6H1zM1 12h6v6H1zM1 23h6v6H1z"/></svg></button>
      <div class="keytools">
        <svg width="32" height="32"><path fill="currentColor" d="M12 1l11 13-11 13L1 14zM20 27h11l-5 5z"/></svg>
        <svg width="36" height="28"><path fill="none" stroke="currentColor" stroke-width="2" d="M0 6h6v16h16V6h14"/><path fill="currentColor" d="M2 18h9v9H2zM18 1h9v9h-9z"/></svg>
        <svg width="38" height="28"><path fill="none" stroke="currentColor" stroke-width="2" d="M0 22h8L26 6h12"/><path fill="currentColor" d="M6 18h9v9H6zM21 1h9v9h-9z"/></svg>
        <svg width="34" height="28"><path fill="none" stroke="currentColor" stroke-width="2" d="M1 28Q2 6 32 2"/><path fill="currentColor" d="M3 1h9v9H3z"/></svg>
        <svg width="40" height="28"><path fill="none" stroke="currentColor" stroke-width="2" d="M2 6h36M1 26q8 0 9-10t9-10q8 0 9 10t10 10"/><path fill="currentColor" d="M0 3h6v6H0zM15 1h9v9h-9zM34 3h6v6h-6z"/></svg>
        <svg width="38" height="28"><path fill="none" stroke="currentColor" stroke-width="2" d="M1 26q10 0 14-10T30 6M8 6h24"/><path fill="currentColor" d="M6 3h6v6H6zM27 1h9v9h-9z"/></svg>
        <svg width="38" height="28"><path fill="none" stroke="currentColor" stroke-width="2" d="M36 26q-10 0-14-10T8 6M5 6h24"/><path fill="currentColor" d="M25 3h6v6h-6zM1 1h9v9H1z"/></svg>
      </div>
    </div>
    <footer class="zoombar">
      <div class="zoomer"><svg width="20" height="10"><path fill="currentColor" d="M0 10l6-5 2 1 5-6 7 10z"/></svg><input type="range" min="0" max="100" value="0" aria-label="Time zoom"><svg width="34" height="14"><path fill="currentColor" d="M0 13L12 2l4 3-8 8zM11 13L21 0l12 13z"/></svg></div>
    </footer>
    <div class="popup" role="menu">
      <button class="ck">Auto-Zoom Height to Fit View</button>
      <hr>
      <button>Show Selected Properties</button>
      <button class="ck">Show Animated Properties</button>
      <button>Show Graph Editor Set</button>
      <hr>
      <button>Auto-Select Graph Type</button>
      <button>Edit Value Graph</button>
      <button class="ck">Edit Speed Graph</button>
      <button>Show Reference Graph</button>
      <hr>
      <button>Snap</button>
      <button>Show Audio Waveforms</button>
      <button class="ck">Show Layer In/Out Points</button>
      <button>Show Layer Markers</button>
      <button class="ck">Show Graph Tool Tips</button>
      <button class="ck">Show Expression Editor</button>
    </div>
  </div>
  <div class="rail">
    <svg width="24" height="28" viewBox="0 0 24 28"><path fill="#b4b4b4" stroke="#777" d="M1 1h21v18l-10 8L1 19z"/></svg>
    <svg width="30" height="26" viewBox="0 0 30 26"><path fill="#b4b4b4" d="M16 5h13v14H16z"/><path fill="none" stroke="#b4b4b4" stroke-width="2" d="M13 2L1 17h12z"/><circle cx="14" cy="19" r="6" fill="#282828" stroke="#b4b4b4" stroke-width="2"/></svg>
  </div>
</section>
</body>
</html>
```
FILE: styles.css
```css
* { box-sizing: border-box; }
body {
  margin: 0;
  height: 100vh;
  display: flex;
  flex-direction: column;
  background: #161616;
  color: #9b9b9b;
  font: 21px/26px "Noto Sans", sans-serif;
  overflow: hidden;
}
svg { display: block; flex: none; }
i, em { font-style: normal; }
a { color: inherit; text-decoration: none; }
button, input, select { font: inherit; color: inherit; margin: 0; padding: 0; border: 0; background: none; }
button { display: flex; align-items: center; white-space: nowrap; }
.defs { position: absolute; }
.ic { color: #b4b4b4; }

/* system menu bar */
.menubar {
  height: 48px;
  flex: none;
  display: flex;
  justify-content: space-between;
  align-items: center;
  background: #dadada;
  color: #1c1c1c;
  font: 25px/48px Inter, sans-serif;
}
.menus { display: flex; align-items: center; gap: 43px; padding-left: 42px; }
.menus .app { font-size: 26px; font-weight: 700; }
.status {
  display: grid;
  grid-template-columns: 73px 90px 72px 75px 70px 74px 73px 58px 87px 71px 63px 63px 59px 307px;
  align-items: center;
}
.status time { white-space: pre; font-size: 26px; }
.badge { font: 700 15px Inter, sans-serif; fill: #fff; }

/* window title */
.titlebar {
  height: 42px;
  flex: none;
  display: grid;
  grid-template-columns: 1fr auto 1fr;
  align-items: center;
  background: #fff;
  border-top: 2px solid #7d93a6;
  border-bottom: 2px solid #000;
  border-radius: 12px 12px 0 0;
  color: #4a4a4a;
}
.titlebar h1 { margin: 0; font: 22px/36px Inter, sans-serif; }
.lights { display: flex; gap: 12px; padding-left: 10px; }
.light { width: 18px; height: 18px; border-radius: 50%; }
.close { background: radial-gradient(circle, #7d0b08 3px, #fb5b54 4px); }
.min { background: #fdb92d; }
.max { background: #27c73f; }

/* tool strip */
.toolbar { height: 48px; flex: none; display: flex; background: #262626; }
.tools { display: flex; align-items: center; width: 1616px; }
.grip { width: 6px; height: 36px; margin: 0 6px 0 10px; background: repeating-linear-gradient(#444 0 2px, transparent 2px 5px); }
.tool { width: 50px; height: 46px; justify-content: center; color: #b4b4b4; border: 2px solid transparent; border-radius: 6px; }
.tool.on { background: #141414; border-color: #333; }
.tool.dim { color: #4c4c4c; }
.tool.axis { width: 46px; }
.tool.local { color: #2b4669; border-color: #303030; }
.sep { width: 14px; height: 36px; background: linear-gradient(#1b1b1b, #1b1b1b) center / 2px 100% no-repeat; }
.sep.wide { height: 48px; margin: 0 31px 0 43px; }
.snap { display: flex; align-items: center; gap: 6px; margin: 0 9px 0 16px; width: 132px; padding-top: 4px; }
.snap input { appearance: none; width: 28px; height: 28px; border: 3px solid #8f8f8f; border-radius: 4px; }
.spaces {
  flex: 1;
  display: grid;
  grid-template-columns: 94px 64px 243px 136px 266px 215px 166px 40px;
  align-items: center;
  padding: 4px 0 0 44px;
  border-left: 2px solid #161616;
  white-space: nowrap;
}
.spaces .sel, .comp em, .cur { color: #3f9cf0; }
.help { display: flex; align-items: center; gap: 25px; width: 472px; padding: 2px 11px 0 10px; border-left: 2px solid #1b1b1b; }
.search { display: flex; align-items: center; height: 39px; flex: 1; border: 2px solid #2f2f2f; border-radius: 5px; background: #161616; padding-left: 11px; }
.search input { flex: 1; min-width: 0; height: 32px; padding-top: 4px; outline: 0; }
.search svg { color: #c4c4c4; margin-right: 8px; }
.search input::placeholder { color: #b4b4b4; opacity: 1; }

/* docked panels */
.upper { flex: 1178 1 0; min-height: 0; display: grid; grid-template-columns: 640px 1fr 412px 14px; column-gap: 8px; padding: 0 4px 0 2px; margin-top: 4px; }
.panel { background: #272727; display: flex; flex-direction: column; min-width: 0; min-height: 0; }
.tabs { display: flex; align-items: center; height: 58px; flex: none; padding-left: 22px; }
.tab { gap: 18px; color: #ccc; }
.project .tabs { padding-left: 24px; }
.project .tab { height: 52px; }
.project .active { border-bottom: 4px solid #b4b4b4; padding-top: 2px; }
.project .second { gap: 20px; margin: 0 50px 0 72px; color: #8f8f8f; padding-right: 2px; }
.swatch { flex: none; width: 20px; height: 20px; background: #a79678; }
.info { display: flex; gap: 11px; padding: 10px 12px 0; flex: none; }
.thumb { width: 228px; height: 130px; background: #000; padding-top: 45px; }
.thumb i { display: block; width: 36px; height: 47px; border: 1px solid #2f4a3a; border-left: 0; background: linear-gradient(90deg, transparent 16px, #f0a 17px, #b5f 20px, #4f7 23px, #9f2 26px, transparent 28px); }
.meta { display: flex; flex-direction: column; font-size: 19px; }
.meta b { display: flex; align-items: center; gap: 4px; font-size: 20px; line-height: 24px; font-weight: 600; }
.search.wide { flex: none; margin: 80px 12px 13px 14px; }
table { border-spacing: 0; table-layout: fixed; flex: none; }
th, td { padding: 0; text-align: left; font-weight: 400; overflow: hidden; white-space: nowrap; }
th { height: 40px; background: linear-gradient(#111, #111) right 1px center / 2px 22px no-repeat #323232; border: solid #000; border-width: 2px 0; padding-top: 2px; font-size: 17px; color: #9b9b9b; }
th:last-child { background: #323232; }
th svg { color: #b4b4b4; }
th.pad { padding-left: 10px; }
.items { width: 636px; margin-left: 2px; }
.c-gap { width: 32px; } .c-tag { width: 41px; } .c-type { width: 53px; } .c-flow { width: 34px; }
.items td { height: 38px; border-bottom: 2px solid #1f1f1f; line-height: 32px; }
.items th.type { background: #323232; padding-left: 11px; overflow: visible; }
.items td.type { padding: 3px 0 0 14px; }
.items td.flow { border: 0; padding-left: 4px; background: #232323; color: #b4b4b4; }
.items td .swatch, .items th:nth-child(3) svg { display: block; margin-left: 9px; }
.name { display: flex; height: 36px; align-items: center; }
.name span { flex: 1; line-height: 33px; padding: 3px 0 0 4px; margin-right: 4px; }
.picked td { background: #323232; }
.picked .name span { background: #9d9d9d; color: #1c1c1c; font-weight: 600; }
.rest { flex: 1; margin: 0 2px; background: linear-gradient(#232323, #232323) right / 34px 100% no-repeat; }
.projbar { display: flex; align-items: center; height: 36px; flex: none; margin: 0 2px; padding-left: 7px; border-top: 2px solid #000; gap: 19px; }
.bpc { height: 30px; width: 90px; margin-right: -6px; justify-content: center; background: #1c1c1c; border: 2px solid #303030; border-radius: 5px; font-size: 17px; }
.hscroll { flex: 1; height: 34px; margin: 0 34px 0 -3px; background: #1e1e1e; }
.hscroll i { display: block; width: 106px; height: 32px; border-radius: 14px; background: #323232; }

/* composition viewer */
.x { font-size: 24px; color: #999; }
.comp .tabs { gap: 19px; padding-left: 20px; }
.comp .tab { gap: 7px; }
.comp .tab svg { margin-left: 6px; }
.crumbs { display: flex; align-items: center; height: 46px; flex: none; gap: 21px; padding: 0 0 4px 40px; }
.cur { display: flex; align-items: center; justify-content: space-between; width: 136px; height: 34px; padding: 0 6px 0 14px; border: 2px solid #303030; border-radius: 5px; background: #161616; }
.viewer { flex: 1; min-height: 0; display: flex; justify-content: center; border-top: 2px solid #000; background: #1e1e1e; overflow: hidden; box-shadow: inset 0 2px #333; padding-top: 2px; }
.canvas { width: 1920px; flex: none; position: relative; background: #000; }
.shape { position: absolute; left: 917px; top: calc(50% - 161px); width: 343px; height: 392px; border: 7px solid #a9ffc8; background: linear-gradient(90deg, #000 167px, #f06 178px, #f0a 184px, #e0f 196px, #9a7fe0 202px, #6aa5b8 208px, #00d8a0 214px, #00ff84 220px, #0f5 226px, #0f0 236px, #8f0 246px, #cf0 254px, #870 259px, #000 264px); }
.anchor { position: absolute; left: calc(50% - 19px); top: calc(50% - 19px); }
.handle { position: absolute; top: calc(50% - 6px); width: 14px; height: 14px; background: #a79678; border: 1px solid #4d4538; }
.handle.l { left: -7px; }
.handle.r { right: -7px; }
.viewbar { display: flex; align-items: center; height: 54px; flex: none; border-top: 8px solid #2a2a2a; box-shadow: inset 0 2px #1a1a1a; padding-left: 7px; }
.div { width: 3px; height: 28px; background: #1f1f1f; }
.pick { display: grid; align-items: center; height: 36px; border: 2px solid #303030; border-radius: 5px; background: #1c1c1c; color: #b4b4b4; }
.pick select { grid-area: 1 / 1; appearance: none; width: 100%; height: 30px; padding-left: 12px; outline: 0; }
.pick svg { grid-area: 1 / 1; justify-self: end; margin-right: 10px; pointer-events: none; }
.zoom { width: 138px; margin: 0 8px; }
.res { width: 177px; margin: 0 8px; }
.vb { width: 44px; height: 36px; justify-content: center; color: #b4b4b4; border: 2px solid transparent; border-radius: 5px; }
.vb.box { margin-left: 6px; background: #1e1e1e; }
.vb.on { background: #141414; border-color: #303030; }
.vb.dim { color: #3e3e3e; }
.vb + .div { margin: 0 7px; }
.ap { margin-left: -2px; }
.expo { width: 68px; padding-left: 6px; color: #3f9cf0; }
.expo + .div { margin: 0 7px; }
.time { width: 136px; height: 36px; justify-content: center; background: #1c1c1c; border: 2px solid #303030; border-radius: 5px; }

/* right column */
.effects { margin: 0; padding: 6px 2px 0; list-style: none; }
.effects li { display: flex; align-items: center; gap: 10px; height: 34px; padding: 0 0 0 11px; border-top: 2px solid #1d1d1d; }
.effects svg { color: #b4b4b4; }
.newfx { display: flex; justify-content: flex-end; align-items: flex-start; height: 42px; flex: none; margin: 0 2px; padding: 5px 12px 0; border: solid #000; border-width: 2px 2px 2px 0; border-bottom-color: #161616; }
.closed { padding: 0 2px; }
.closed button { width: 100%; height: 60px; padding: 4px 0 0 22px; border-bottom: 4px solid #161616; }
.vscroll { display: flex; align-items: flex-end; margin-left: -8px; width: 22px; background: #1e1e1e; padding: 0 0 2px 2px; }
.vscroll i { width: 20px; height: 416px; border-radius: 8px; background: #323232; }

/* timeline */
.timeline { flex: 766 1 0; min-height: 0; display: grid; grid-template-columns: 1574px 1fr 31px; margin: 8px 2px 2px; border: 2px solid #3a90e8; border-radius: 0 0 14px 14px; background: #272727; }
.layers { display: flex; flex-direction: column; min-width: 0; min-height: 0; }
.layers .tabs { height: 56px; gap: 19px; padding-left: 18px; }
.tltop { display: flex; align-items: center; height: 68px; flex: none; padding: 0 31px 4px 21px; }
.clock { display: flex; flex-direction: column; width: 179px; padding-top: 8px; white-space: nowrap; color: #1b6aa5; font-size: 19px; }
.clock strong { font-size: 30px; line-height: 32px; font-weight: 600; color: #46a7f5; padding-left: 3px; }
.tltop .search { padding-left: 10px; }
.tlbtns { display: grid; grid-template-columns: 67px 53px 53px 67px 32px; align-items: center; margin-left: 32px; color: #b4b4b4; }
.grid { width: 1574px; }
.g-av { width: 135px; } .g-tag { width: 65px; } .g-num { width: 66px; } .g-keys { width: 95px; } .g-sw { width: 318px; } .g-mode { width: 331px; } .g-par { width: 234px; } .g-end { width: 31px; }
.grid td { height: 34px; border-bottom: 2px solid #1c1c1c; }
.av { display: grid; grid-template-columns: 30px 34px 27px 20px; align-items: center; padding-left: 11px; }
.tagc svg { margin-left: 27px; }
.sw { display: grid; grid-template-columns: 32px 29px 30px 28px 30px 33px 30px 20px; align-items: center; padding-left: 9px; }
.fx { font: italic 24px/30px "Liberation Serif", serif; color: #b4b4b4; }
.mode { display: grid; grid-template-columns: 153px 33px 1fr; }
.layer td { background: #4a4a4a; color: #b9b9b9; }
.layer td.end, .prop td.end { background: #252525; border-color: #252525; }
.cells { display: grid; grid-auto-flow: column; grid-auto-columns: 26px; gap: 4px; justify-content: start; padding-left: 8px; }
.cells i { height: 26px; background: #2f2f2f; display: grid; place-items: center; color: #c4c4c4; }
.lab { display: flex; align-items: center; gap: 7px; padding-left: 13px; }
.lab .swatch { width: 24px; height: 24px; }
.grid .num { padding-left: 12px; font-weight: 600; }
.src { display: flex; align-items: center; height: 32px; padding-left: 2px; }
.src span { flex: 1; height: 32px; line-height: 28px; padding-left: 4px; border: 3px solid #a9a9a9; font-weight: 500; }
.blend { display: flex; align-items: center; gap: 9px; padding-left: 3px; }
.blend .pick { width: 143px; }
.blend select { padding-left: 14px; }
.blend i { width: 26px; height: 26px; background: #2f2f2f; }
.grid .pick { height: 32px; border: 0; border-radius: 0; }
.parent { display: flex; align-items: center; gap: 11px; padding-left: 9px; }
.parent .pick { width: 181px; }
.prop td { background: #242424; }
.watch { display: flex; align-items: center; gap: 10px; padding-left: 7px; color: #b4b4b4; }
.pname { margin-left: 10px; height: 32px; line-height: 36px; padding-left: 6px; background: #4a4a4a; color: #aaa; }
.keys { display: flex; gap: 16px; padding-left: 15px; color: #b4b4b4; }
.grid .val { padding-left: 10px; color: #3f9cf0; }
.link { padding-left: 34px; color: #b4b4b4; }
.layers .rest { margin: 0; }
.tlbar { display: flex; align-items: center; height: 34px; flex: none; gap: 2px; padding-left: 6px; border-top: 2px solid #000; }
.mini { width: 34px; height: 30px; justify-content: center; border: 2px solid #303030; }
.tlbar .ic { margin-left: 6px; }

/* graph editor */
.graph { position: relative; display: flex; flex-direction: column; min-width: 0; min-height: 0; padding-top: 62px; background: #282828; border-right: 2px solid #161616; }
.plot { width: 100%; flex: 1; min-height: 0; }
.ruler { font-size: 19px; text-anchor: middle; fill: #9b9b9b; }
.scale { font-size: 20px; fill: #9b9b9b; }
.expr { display: flex; gap: 28px; height: 60px; flex: none; margin: 8px 12px 0; font: 32px/46px "Liberation Mono", monospace; }
.gutter { width: 80px; padding-left: 22px; background: #1b1b1b; color: #666; }
.expr code { flex: 1; font: inherit; background: #1a1a1a; color: #c9c9c9; padding-left: 3px; }
.expr b { font-weight: 400; color: #b5a642; }
.gtools { display: flex; align-items: center; height: 62px; flex: none; padding: 12px 0 0 404px; gap: 15px; }
.boxed { width: 42px; height: 40px; margin-left: -9px; justify-content: center; border: 2px solid #303030; background: #141414; }
.keytools { display: grid; grid-template-columns: 45px 46px 54px 97px 53px 50px 38px; color: #3e3e3e; margin-left: 403px; }
.zoombar { height: 34px; flex: none; background: #232323; }
.zoomer { display: flex; align-items: center; width: 216px; height: 34px; padding-left: 12px; border-top: 2px solid #000; color: #b4b4b4; background: #272727; }
.zoomer input { appearance: none; width: 98px; height: 20px; margin: 0 22px 0 21px; background: linear-gradient(#444, #444) center / 100% 3px no-repeat; }
.zoomer input::-webkit-slider-thumb { appearance: none; width: 20px; height: 20px; border-radius: 50%; border: 4px solid #8f8f8f; background: #272727; }
.popup { position: absolute; left: 518px; bottom: 8px; width: 436px; padding: 11px 0 9px; border-radius: 12px; background: #ececec; box-shadow: 0 6px 30px rgba(0, 0, 0, .5); font: 25px/44px Inter, sans-serif; color: #222; }
.popup button { width: 100%; height: 44px; padding-left: 48px; }
.popup hr { height: 2px; margin: 10px 28px; border: 0; background: #d0d0d0; }
.popup .ck { padding-left: 24px; }
.popup .ck::before { content: ""; width: 9px; height: 18px; margin: -6px 15px 0 0; border: solid #111; border-width: 0 3px 3px 0; transform: rotate(40deg); }
.rail { display: flex; flex-direction: column; align-items: center; gap: 14px; padding-top: 128px; background: linear-gradient(#000, #000) 0 162px / 100% 2px no-repeat; }
```
